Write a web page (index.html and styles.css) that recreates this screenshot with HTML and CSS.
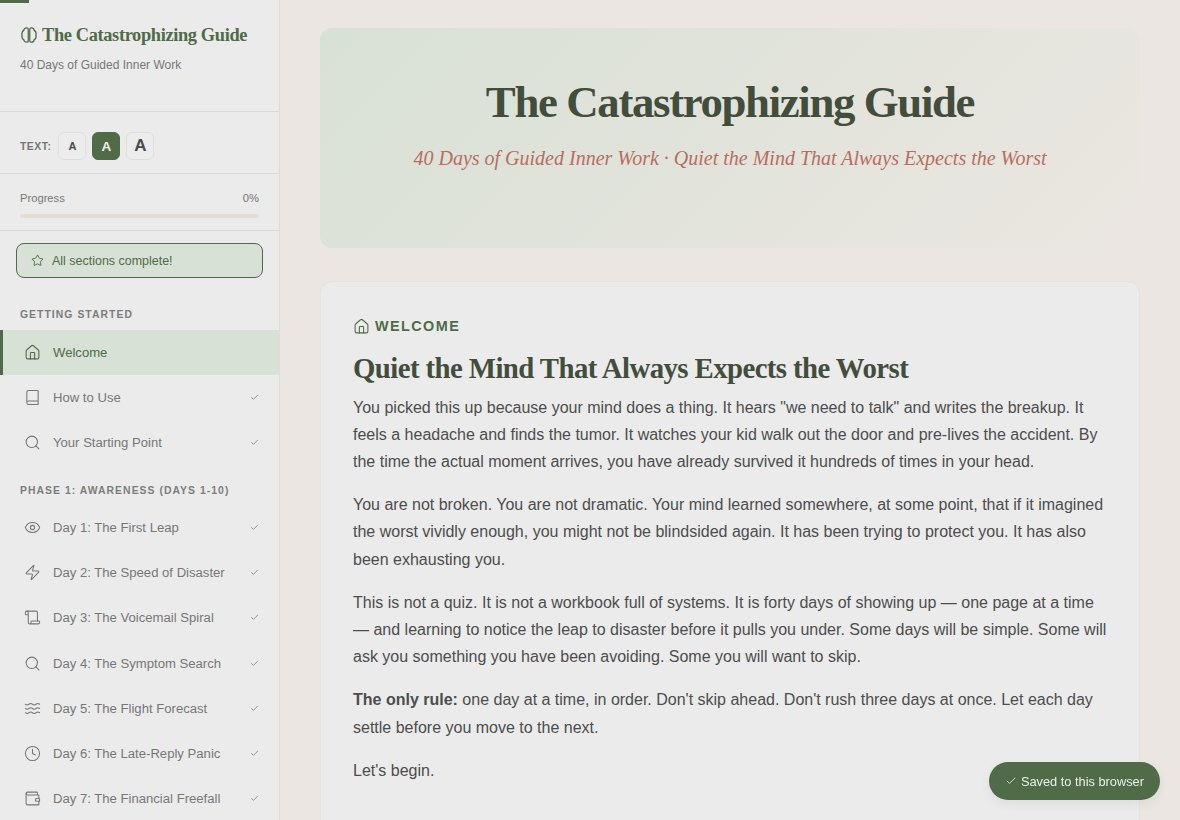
FILE: index.html
```html
<!DOCTYPE html>
<html lang="en">
<head>
<meta charset="utf-8">
<title>The Catastrophizing Guide</title>
<link rel="stylesheet" href="styles.css">
</head>
<body>
<svg class="defs" width="0" height="0" aria-hidden="true">
  <symbol id="i-house" viewBox="0 0 24 24"><path d="M15 21v-8a1 1 0 0 0-1-1h-4a1 1 0 0 0-1 1v8"/><path d="M3 10a2 2 0 0 1 .709-1.528l7-5.999a2 2 0 0 1 2.582 0l7 5.999A2 2 0 0 1 21 10v9a2 2 0 0 1-2 2H5a2 2 0 0 1-2-2z"/></symbol>
  <symbol id="i-book" viewBox="0 0 24 24"><path d="M4 19.500v-15A2.500 2.500 0 0 1 6.500 2H19a1 1 0 0 1 1 1v18a1 1 0 0 1-1 1H6.500a2.500 2.500 0 0 1-2.500-2.500 2.500 2.500 0 0 1 2.500-2.500H20"/></symbol>
  <symbol id="i-search" viewBox="0 0 24 24"><circle cx="11" cy="11" r="8"/><path d="m21 21-4.300-4.300"/></symbol>
  <symbol id="i-eye" viewBox="0 0 24 24"><path d="M2.062 12.348a1 1 0 0 1 0-.696 10.750 10.750 0 0 1 19.876 0 1 1 0 0 1 0 .696 10.750 10.750 0 0 1-19.876 0"/><circle cx="12" cy="12" r="3"/></symbol>
  <symbol id="i-zap" viewBox="0 0 24 24"><path d="M4 14a1 1 0 0 1-.78-1.630l9.900-10.200a.5.5 0 0 1 .86.46l-1.920 6.020A1 1 0 0 0 13 10h7a1 1 0 0 1 .78 1.630l-9.900 10.200a.5.5 0 0 1-.86-.46l1.920-6.020A1 1 0 0 0 11 14z"/></symbol>
  <symbol id="i-scroll" viewBox="0 0 24 24"><path d="M19 17V5a2 2 0 0 0-2-2H4"/><path d="M8 21h12a2 2 0 0 0 2-2v-1a1 1 0 0 0-1-1H11a1 1 0 0 0-1 1v1a2 2 0 1 1-4 0V5a2 2 0 1 0-4 0v2a1 1 0 0 0 1 1h3"/></symbol>
  <symbol id="i-waves" viewBox="0 0 24 24"><path d="M2 6c.6.5 1.200 1 2.500 1C7 7 7 5 9.500 5c2.600 0 2.400 2 5 2 2.500 0 2.500-2 5-2 1.300 0 1.900.5 2.500 1"/><path d="M2 12c.6.5 1.200 1 2.500 1 2.500 0 2.500-2 5-2 2.600 0 2.400 2 5 2 2.500 0 2.500-2 5-2 1.300 0 1.900.5 2.500 1"/><path d="M2 18c.6.5 1.200 1 2.500 1 2.500 0 2.500-2 5-2 2.600 0 2.400 2 5 2 2.500 0 2.500-2 5-2 1.300 0 1.900.5 2.500 1"/></symbol>
  <symbol id="i-clock" viewBox="0 0 24 24"><circle cx="12" cy="12" r="10"/><path d="M12 6v6l4 2"/></symbol>
  <symbol id="i-wallet" viewBox="0 0 24 24"><path d="M19 7V4a1 1 0 0 0-1-1H5a2 2 0 0 0 0 4h15a1 1 0 0 1 1 1v4h-3a2 2 0 0 0 0 4h3a1 1 0 0 0 1-1v-2a1 1 0 0 0-1-1"/><path d="M3 5v14a2 2 0 0 0 2 2h15a1 1 0 0 0 1-1v-4"/></symbol>
  <symbol id="i-star" viewBox="0 0 24 24"><path d="M11.525 2.295a.53.53 0 0 1 .95 0l2.310 4.679a2.123 2.123 0 0 0 1.595 1.160l5.166.756a.53.53 0 0 1 .294.904l-3.736 3.638a2.123 2.123 0 0 0-.611 1.878l.882 5.140a.53.53 0 0 1-.771.56l-4.618-2.428a2.122 2.122 0 0 0-1.973 0L6.396 21.010a.53.53 0 0 1-.77-.56l.881-5.139a2.122 2.122 0 0 0-.611-1.879L2.160 9.795a.53.53 0 0 1 .294-.906l5.165-.755a2.122 2.122 0 0 0 1.597-1.160z"/></symbol>
  <symbol id="i-check" viewBox="0 0 24 24"><path d="M20 6 9 17l-5-5"/></symbol>
  <symbol id="i-brain" viewBox="0 0 24 24"><path d="M9.500 2.500C6.800 2.200 5.200 4 5 5.800 3 6.800 2.200 9 2.600 12c-.4 3 .4 5.200 2.400 6.200.2 1.800 1.800 3.600 4.500 3.300 1.300-.2 1.500-1 1.500-2v-15c0-1-.2-1.800-1.500-2z"/><path d="M14.500 2.500c2.700-.3 4.300 1.500 4.500 3.300 2 1 2.800 3.200 2.400 6.200.4 3-.4 5.200-2.400 6.200-.2 1.800-1.800 3.600-4.500 3.300-1.300-.2-1.500-1-1.500-2v-15c0-1 .2-1.800 1.500-2z"/></symbol>
</svg>

<div class="topbar"></div>

<div class="app">
  <aside class="sidebar">
    <header class="brand">
      <div class="brand-title"><svg class="ic brand-ic"><use href="#i-brain"/></svg><span>The Catastrophizing Guide</span></div>
      <p class="brand-sub">40 Days of Guided Inner Work</p>
    </header>

    <div class="textsize">
      <span class="textsize-label">TEXT:</span>
      <button class="ts ts-s">A</button>
      <button class="ts ts-m on">A</button>
      <button class="ts ts-l">A</button>
    </div>

    <div class="progress">
      <div class="progress-row"><span>Progress</span><span>0%</span></div>
      <div class="progress-track"></div>
    </div>

    <div class="complete-wrap">
      <div class="complete"><svg class="ic complete-ic"><use href="#i-star"/></svg><span>All sections complete!</span></div>
    </div>

    <nav class="nav">
      <h3 class="nav-head first">GETTING STARTED</h3>
      <a class="nav-item active"><svg class="ic"><use href="#i-house"/></svg><span class="nav-label">Welcome</span></a>
      <a class="nav-item"><svg class="ic"><use href="#i-book"/></svg><span class="nav-label">How to Use</span><svg class="tick"><use href="#i-check"/></svg></a>
      <a class="nav-item"><svg class="ic"><use href="#i-search"/></svg><span class="nav-label">Your Starting Point</span><svg class="tick"><use href="#i-check"/></svg></a>
      <h3 class="nav-head">PHASE 1: AWARENESS (DAYS 1-10)</h3>
      <a class="nav-item"><svg class="ic"><use href="#i-eye"/></svg><span class="nav-label">Day 1: The First Leap</span><svg class="tick"><use href="#i-check"/></svg></a>
      <a class="nav-item"><svg class="ic"><use href="#i-zap"/></svg><span class="nav-label">Day 2: The Speed of Disaster</span><svg class="tick"><use href="#i-check"/></svg></a>
      <a class="nav-item"><svg class="ic"><use href="#i-scroll"/></svg><span class="nav-label">Day 3: The Voicemail Spiral</span><svg class="tick"><use href="#i-check"/></svg></a>
      <a class="nav-item"><svg class="ic"><use href="#i-search"/></svg><span class="nav-label">Day 4: The Symptom Search</span><svg class="tick"><use href="#i-check"/></svg></a>
      <a class="nav-item"><svg class="ic"><use href="#i-waves"/></svg><span class="nav-label">Day 5: The Flight Forecast</span><svg class="tick"><use href="#i-check"/></svg></a>
      <a class="nav-item"><svg class="ic"><use href="#i-clock"/></svg><span class="nav-label">Day 6: The Late-Reply Panic</span><svg class="tick"><use href="#i-check"/></svg></a>
      <a class="nav-item"><svg class="ic"><use href="#i-wallet"/></svg><span class="nav-label">Day 7: The Financial Freefall</span><svg class="tick"><use href="#i-check"/></svg></a>
    </nav>
  </aside>

  <main class="main">
    <section class="hero">
      <h1>The Catastrophizing Guide</h1>
      <p>40 Days of Guided Inner Work · Quiet the Mind That Always Expects the Worst</p>
    </section>

    <article class="card">
      <div class="eyebrow"><svg class="ic eyebrow-ic"><use href="#i-house"/></svg><span>WELCOME</span></div>
      <h2>Quiet the Mind That Always Expects the Worst</h2>
      <p>You picked this up because your mind does a thing. It hears "we need to talk" and writes the breakup. It feels a headache and finds the tumor. It watches your kid walk out the door and pre-lives the accident. By the time the actual moment arrives, you have already survived it hundreds of times in your head.</p>
      <p>You are not broken. You are not dramatic. Your mind learned somewhere, at some point, that if it imagined the worst vividly enough, you might not be blindsided again. It has been trying to protect you. It has also been exhausting you.</p>
      <p>This is not a quiz. It is not a workbook full of systems. It is forty days of showing up — one page at a time — and learning to notice the leap to disaster before it pulls you under. Some days will be simple. Some will ask you something you have been avoiding. Some you will want to skip.</p>
      <p><strong>The only rule:</strong> one day at a time, in order. Don't skip ahead. Don't rush three days at once. Let each day settle before you move to the next.</p>
      <p>Let's begin.</p>
    </article>
  </main>
</div>

<div class="toast"><svg class="toast-ic"><use href="#i-check"/></svg><span>Saved to this browser</span></div>
</body>
</html>
```

FILE: styles.css
```css
* { box-sizing: border-box; }
html, body { margin: 0; height: 100%; overflow: hidden; }
body {
  font-family: "Liberation Sans", Arial, sans-serif;
  color: #4a4a4a;
  background: #ebe6e1;
}
.defs { position: absolute; }
.ic {
  width: 18px; height: 18px; flex: none;
  fill: none; stroke: currentColor; stroke-width: 1.5;
  stroke-linecap: round; stroke-linejoin: round;
}
.topbar { position: fixed; top: 0; left: 0; width: 29px; height: 3px; background: #4f6b47; z-index: 5; }
.app { display: flex; height: 820px; }

/* Sidebar */
.sidebar {
  width: 280px; flex: none; height: 820px; overflow: hidden;
  background: #ebebeb; border-right: 1px solid #dedcd9;
}
.brand { height: 112px; padding: 24px 20px 0; border-bottom: 1px solid #d9d9d7; }
.brand-title {
  display: flex; align-items: center; gap: 4px;
  font: bold 18.4px/22px "Liberation Serif", "Times New Roman", serif;
  letter-spacing: -0.02em; color: #4f6b47;
}
.brand-ic { width: 18px; height: 18px; stroke-width: 1.7; }
.brand-sub { margin: 11px 0 0; font-size: 12px; line-height: 16px; color: #777; }

.textsize {
  height: 62px; padding: 20px 20px 0; display: flex; align-items: flex-start; gap: 6px;
  border-bottom: 1px solid #d9d9d7;
}
.textsize-label { font-size: 10.4px; line-height: 29px; font-weight: bold; letter-spacing: 0.5px; color: #777; margin-right: 1px; }
.ts {
  width: 28px; height: 28px; padding: 0; border-radius: 6px;
  border: 1px solid #dfdfdd; background: #ececec; color: #4a4a4a;
  font-family: "Liberation Sans", Arial, sans-serif; font-weight: bold;
  display: flex; align-items: center; justify-content: center;
}
.ts-s { font-size: 11px; }
.ts-m { font-size: 13.5px; }
.ts-l { font-size: 17px; }
.ts.on { background: #4f6b47; border-color: #4f6b47; color: #f0f0ec; }

.progress { height: 57px; padding: 17px 20px 0; border-bottom: 1px solid #d9d9d7; }
.progress-row { display: flex; justify-content: space-between; font-size: 11.2px; line-height: 15px; color: #777; }
.progress-track { height: 4px; margin-top: 8px; border-radius: 2px; background: #e2dcd6; }

.complete-wrap { padding: 12px 16px 0; }
.complete {
  height: 35px; padding: 0 14px; display: flex; align-items: center; gap: 8px;
  border: 1px solid #4f6b47; border-radius: 8px; background: #d8e1d6;
  font-size: 12.48px; color: #4f6b47;
}
.complete-ic { width: 13px; height: 13px; stroke-width: 1.7; }

.nav-head {
  margin: 0; padding: 19px 20px 0; height: 39.6px;
  font-size: 10.4px; line-height: 14px; font-weight: bold; letter-spacing: 1.04px; color: #7d7d7d;
}
.nav-head.first { height: 52px; padding-top: 30px; }
.nav-item {
  height: 45.17px; padding: 0 20px 0 24px; display: flex; align-items: center; gap: 12px;
  font-size: 13.12px; color: #777;
}
.nav-item .ic { width: 17px; height: 17px; }
.nav-label { flex: 1; white-space: nowrap; }
.nav-item.active {
  background: #d8e1d6; color: #4f6b47;
  box-shadow: inset 3px 0 0 #4f6b47;
}
.tick { width: 9px; height: 9px; flex: none; fill: none; stroke: #777; stroke-width: 2; stroke-linecap: round; stroke-linejoin: round; }

/* Main */
.main { flex: 1; min-width: 0; padding: 28px 40px 0; overflow: hidden; }
.hero {
  height: 220px; padding-top: 45px; text-align: center; border-radius: 12px;
  background: linear-gradient(135deg, #d8e1d6 0%, #ebe6e1 100%);
}
.hero h1 {
  margin: 0; font: bold 44.8px/58px "Liberation Serif", "Times New Roman", serif;
  letter-spacing: -0.03em; color: #434d3c;
}
.hero p {
  margin: 13px 0 0; font: italic 20px/28px "Liberation Serif", "Times New Roman", serif;
  color: #b86e5c;
}
.card {
  margin-top: 33px; padding: 32px; border-radius: 12px; height: 600px;
  background: #ebebeb; border: 1px solid #e6e3df;
}
.eyebrow {
  display: flex; align-items: center; gap: 5px; height: 24px;
  font-size: 14.4px; font-weight: bold; letter-spacing: 1.44px; color: #4f6b47;
}
.eyebrow-ic { width: 17px; height: 17px; }
.card h2 {
  margin: 11px 0 6.5px; font: bold 28.8px/38px "Liberation Serif", "Times New Roman", serif;
  letter-spacing: -0.02em; color: #434d3c;
}
.card p { margin: 0 0 16px; font-size: 16px; line-height: 27.2px; color: #4d4d4d; }
.card strong { font-weight: bold; }

/* Toast */
.toast {
  position: fixed; right: 20px; bottom: 20px; height: 38px; padding: 0 16px;
  display: flex; align-items: center; gap: 4px; border-radius: 19px;
  background: #4f6b47; color: #eef0ea; font-size: 12.8px;
  box-shadow: 0 4px 12px rgba(0,0,0,.06);
}
.toast-ic { width: 12px; height: 12px; fill: none; stroke: currentColor; stroke-width: 1.6; stroke-linecap: round; stroke-linejoin: round; }
```
